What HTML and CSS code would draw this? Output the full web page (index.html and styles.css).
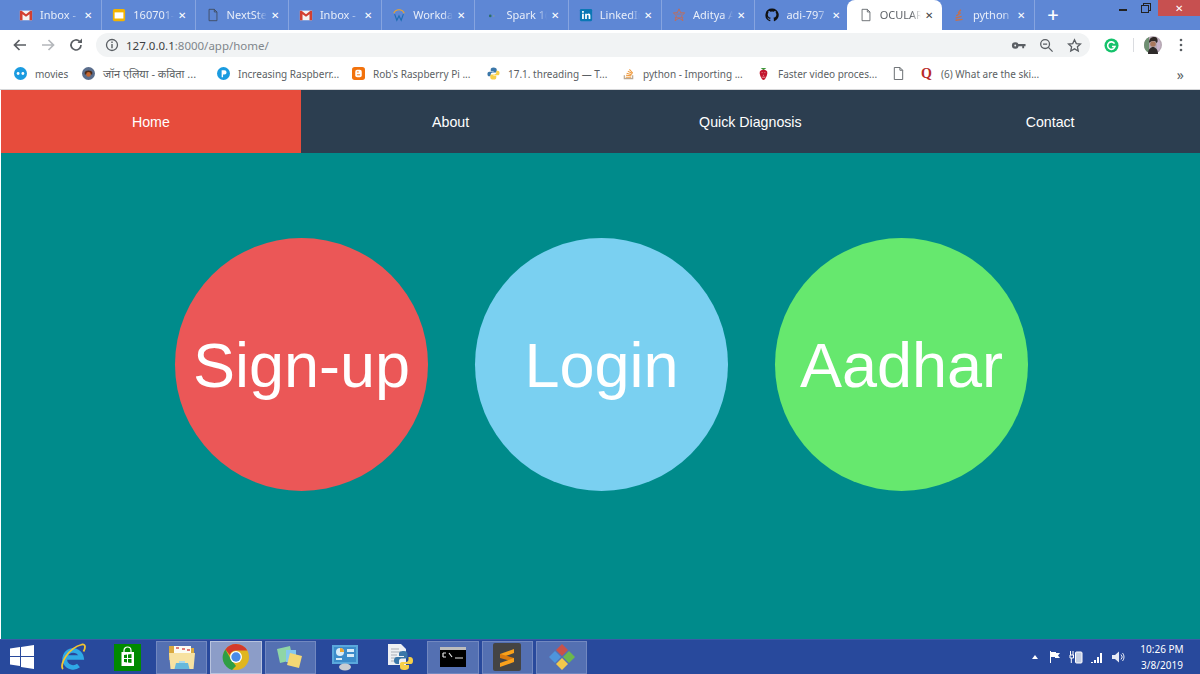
FILE: index.html
```html
<!DOCTYPE html>
<html lang="en">
<head>
  <meta charset="UTF-8">
  <title>OCULAR</title>
  <link rel="stylesheet" href="styles.css">
</head>
<body>
  <!-- Browser tabs -->
  <div class="tabstrip">
    <div class="tab">
      <svg class="fav" viewBox="0 0 16 16"><path d="M1 3h14v11H1z" fill="#f4f4f4"/><path d="M1 3v11h3V7l4 3 4-3v7h3V3h-2L8 7 3 3z" fill="#d23f31"/></svg>
      <span class="tab-title">Inbox -</span><span class="tab-x">✕</span>
    </div>
    <div class="tab">
      <svg class="fav" viewBox="0 0 16 16"><rect x="1" y="1" width="14" height="14" rx="2" fill="#f4b400"/><rect x="3" y="5" width="10" height="7" fill="#fff"/></svg>
      <span class="tab-title">160701-</span><span class="tab-x">✕</span>
    </div>
    <div class="tab">
      <svg class="fav" viewBox="0 0 16 16"><path d="M3.500 1.500h6l3 3v10h-9zM9.500 1.500v3h3" fill="none" stroke="#3f4a5e"/></svg>
      <span class="tab-title">NextSte</span><span class="tab-x">✕</span>
    </div>
    <div class="tab">
      <svg class="fav" viewBox="0 0 16 16"><path d="M1 3h14v11H1z" fill="#f4f4f4"/><path d="M1 3v11h3V7l4 3 4-3v7h3V3h-2L8 7 3 3z" fill="#d23f31"/></svg>
      <span class="tab-title">Inbox -</span><span class="tab-x">✕</span>
    </div>
    <div class="tab">
      <svg class="fav" viewBox="0 0 16 16"><path d="M2 6a6.500 6.500 0 0 1 12 0" fill="none" stroke="#f5a623" stroke-width="1.300"/><path d="M3 7l2.500 7L8 9l2.500 5L13 7" fill="none" stroke="#1f6fb5" stroke-width="1.300"/></svg>
      <span class="tab-title">Workda</span><span class="tab-x">✕</span>
    </div>
    <div class="tab">
      <svg class="fav" viewBox="0 0 16 16"><circle cx="6" cy="9" r="1.500" fill="#2c6e6a"/><circle cx="10" cy="9" r="1" fill="#7d9aa8"/></svg>
      <span class="tab-title">Spark 1(</span><span class="tab-x">✕</span>
    </div>
    <div class="tab">
      <svg class="fav" viewBox="0 0 16 16"><rect x="1" y="1" width="14" height="14" rx="1.500" fill="#0a77b5"/><path d="M3.500 6.500h2v6h-2zM3.500 3.500h2v2h-2zM7 6.500h2v1c.5-.8 1.200-1.200 2-1.200 1.500 0 2 1 2 2.500v3.700h-2V9c0-.7-.3-1-.9-1S9 8.400 9 9.100v3.400H7z" fill="#fff"/></svg>
      <span class="tab-title">LinkedIn</span><span class="tab-x">✕</span>
    </div>
    <div class="tab">
      <svg class="fav" viewBox="0 0 16 16"><path d="M8 1l2 4.500h4.500L11 9l1.500 5.500L8 11.500 3.500 14.500 5 9 1.500 5.500H6z" fill="none" stroke="#c96a4f"/><path d="M3 11h10M5 7h6" stroke="#c96a4f" stroke-width=".7"/></svg>
      <span class="tab-title">Aditya A</span><span class="tab-x">✕</span>
    </div>
    <div class="tab">
      <svg class="fav" viewBox="0 0 16 16"><path d="M8 .5a7.500 7.500 0 0 0-2.400 14.600c.4.100.5-.2.500-.4v-1.300c-2.100.5-2.500-1-2.500-1-.3-.9-.8-1.100-.8-1.100-.7-.5.100-.5.100-.5.700.1 1.100.8 1.100.8.700 1.100 1.700.8 2.100.6.100-.5.300-.8.500-1-1.700-.2-3.400-.8-3.400-3.700 0-.8.300-1.500.8-2-.1-.2-.3-1 .1-2 0 0 .6-.2 2.100.8a7 7 0 0 1 3.800 0c1.500-1 2.100-.8 2.100-.8.400 1 .2 1.800.1 2 .5.500.8 1.200.8 2 0 2.900-1.800 3.500-3.400 3.700.3.200.5.700.5 1.400v2.100c0 .2.100.5.500.4A7.500 7.500 0 0 0 8 .5z" fill="#111"/></svg>
      <span class="tab-title">adi-797</span><span class="tab-x">✕</span>
    </div>
    <div class="tab active">
      <svg class="fav" viewBox="0 0 16 16"><path d="M3.500 1.500h6l3 3v10h-9zM9.500 1.500v3h3" fill="none" stroke="#5f6368"/></svg>
      <span class="tab-title">OCULAR</span><span class="tab-x">✕</span>
    </div>
    <div class="tab">
      <svg class="fav" viewBox="0 0 16 16"><path d="M4 14l8-1M4 11.500l7-2M5 9l5-3.500M7 6l3-4" fill="none" stroke="#c7704a" stroke-width="1.500"/></svg>
      <span class="tab-title">python</span><span class="tab-x">✕</span>
    </div>
    <span class="new-tab">+</span>
    <div class="win-btns">
      <span class="win-min"></span>
      <span class="win-restore"></span>
      <span class="win-close">✕</span>
    </div>
  </div>

  <!-- Address bar -->
  <div class="toolbar">
    <svg class="tool" viewBox="0 0 16 16"><path d="M14 8H3M7.500 3L2.500 8l5 5" fill="none" stroke="#5a5e63" stroke-width="1.700"/></svg>
    <svg class="tool" viewBox="0 0 16 16"><path d="M2 8h11M8.500 3l5 5-5 5" fill="none" stroke="#b4b7bb" stroke-width="1.700"/></svg>
    <svg class="tool" viewBox="0 0 16 16"><path d="M13 8a5 5 0 1 1-1.500-3.600" fill="none" stroke="#5a5e63" stroke-width="1.700"/><path d="M9.500 6h4.500V1.500z" fill="#5a5e63"/></svg>
    <div class="omnibox">
      <svg class="info" viewBox="0 0 14 14"><circle cx="7" cy="7" r="5.500" fill="none" stroke="#5a5e63" stroke-width="1.300"/><path d="M6.300 6h1.400v4.200H6.300zM6.300 3.600h1.400V5H6.300z" fill="#5a5e63"/></svg>
      <span class="url">127.0.0.1<span class="url-dim">:8000/app/home/</span></span>
      <div class="omni-right">
        <svg class="omni-icon" viewBox="0 0 16 16"><circle cx="4.500" cy="8" r="3.500" fill="#5a5e63"/><path d="M6 6.300h9.500v2.500h-1.500v2.200h-2V8.800H6z" fill="#5a5e63"/><circle cx="4.500" cy="8" r="1" fill="#f1f3f4"/></svg>
        <svg class="omni-icon" viewBox="0 0 16 16"><circle cx="6.500" cy="6.500" r="4.700" fill="none" stroke="#5a5e63" stroke-width="1.400"/><path d="M10 10l4.500 4.500M4.300 6.500h4.400" fill="none" stroke="#5a5e63" stroke-width="1.400"/></svg>
        <svg class="omni-icon" viewBox="0 0 16 16"><path d="M8 1.800l1.900 4.100 4.500.5-3.300 3 .9 4.500-4-2.300-4 2.300.9-4.500-3.300-3 4.500-.5z" fill="none" stroke="#5a5e63" stroke-width="1.400"/></svg>
      </div>
    </div>
    <svg class="grammarly" viewBox="0 0 16 16"><circle cx="8" cy="8" r="7.500" fill="#15c26b"/><path d="M11.300 6a4 4 0 1 0 .5 3H8.500" fill="none" stroke="#fff" stroke-width="1.700"/></svg>
    <span class="tool-sep"></span>
    <svg class="avatar" viewBox="0 0 18 18"><circle cx="9" cy="9" r="9" fill="#b7a9b4"/><path d="M0 9a9 9 0 0 1 5-8v16a9 9 0 0 1-5-8z" fill="#6f8f72"/><path d="M13 2a9 9 0 0 1 0 14z" fill="#c8b3cc"/><path d="M5 7c0-4 2-6 5-6s4 2 3.500 5l-1.500 1c0-2-1-2-3-2S6 6 5 7z" fill="#2f2724"/><circle cx="9" cy="8" r="2.800" fill="#a9785e"/><path d="M4 18c0-5 3-7 5-7s5 2 5 7z" fill="#2e2a2a"/></svg>
    <svg class="menu" viewBox="0 0 4 16"><circle cx="2" cy="3" r="1.300" fill="#5a5e63"/><circle cx="2" cy="8" r="1.300" fill="#5a5e63"/><circle cx="2" cy="13" r="1.300" fill="#5a5e63"/></svg>
  </div>

  <!-- Bookmarks -->
  <div class="bookmarks">
    <div class="bm bm-short">
      <svg class="fav-b" viewBox="0 0 12 12"><circle cx="6" cy="6" r="6" fill="#1a9be0"/><circle cx="3.800" cy="6" r="1.300" fill="#fff"/><circle cx="8.200" cy="6" r="1.300" fill="#fff"/></svg>
      <span>movies</span>
    </div>
    <div class="bm">
      <svg class="fav-b" viewBox="0 0 14 14"><circle cx="7" cy="7" r="7" fill="#5a6d8c"/><path d="M3 6c0-3 8-3 8 0v2H3z" fill="#4d2a17"/><circle cx="7" cy="8" r="2.500" fill="#c4652f"/></svg>
      <span class="hindi">जॉन एलिया - कविता ...</span>
    </div>
    <div class="bm">
      <svg class="fav-b" viewBox="0 0 14 14"><circle cx="7" cy="7" r="7" fill="#1a9be0"/><path d="M5 3.500h3a2.300 2.300 0 0 1 0 4.600H6.500V11H5z" fill="#fff"/></svg>
      <span>Increasing Raspberr...</span>
    </div>
    <div class="bm">
      <svg class="fav-b" viewBox="0 0 14 14"><rect width="14" height="14" rx="3" fill="#f2720c"/><rect x="3.500" y="3" width="7" height="8" rx="2" fill="#fff"/><path d="M5.300 5.300h2M5.300 8.400h3.400" stroke="#f2720c"/></svg>
      <span>Rob's Raspberry Pi ...</span>
    </div>
    <div class="bm">
      <svg class="fav-b" viewBox="0 0 14 14"><path d="M7 .5C4.500.5 4 1.500 4 3v1.500h3.200V5H2.500C1 5 .5 6 .5 7.500S1 10 2.500 10H4V8c0-1 1-2 2-2h3c1 0 1.500-.7 1.500-1.500V3C10.500 1.500 9.500.5 7 .5z" fill="#3a76a8"/><path d="M7 13.500c2.500 0 3-1 3-2.500V9.500H6.800V9h4.700c1.500 0 2-1 2-2.500S13 4 11.500 4H10v2c0 1-1 2-2 2H5c-1 0-1.500.7-1.500 1.500V11c0 1.500 1 2.500 3.500 2.500z" fill="#f7cf48"/></svg>
      <span>17.1. threading — T...</span>
    </div>
    <div class="bm">
      <svg class="fav-b" viewBox="0 0 14 14"><path d="M2.500 9v3.500h9V9" fill="none" stroke="#b9a894" stroke-width="1.300"/><path d="M4 11h6M4.300 9l5.700.5M5 6.800l5.500 1.500M6.300 4.500l5 2.800M8 2.500l3.500 4" fill="none" stroke="#ef9a3d" stroke-width="1.100"/></svg>
      <span>python - Importing ...</span>
    </div>
    <div class="bm">
      <svg class="fav-b" viewBox="0 0 14 14"><path d="M4 1h6L7 3.500z" fill="#3c9a3c"/><path d="M7 3c3.500 0 4.500 2 4 4.500S8.500 14 7 14 3.500 10 3 7.500 3.500 3 7 3z" fill="#c3162f"/><path d="M5 6h1M8 6h1M6.500 9h1M5 11h4" stroke="#f3b7b7" stroke-width=".8"/></svg>
      <span>Faster video proces...</span>
    </div>
    <div class="bm bm-icon">
      <svg class="fav-b" viewBox="0 0 14 14"><path d="M2.500.5h6l3 3v10h-9zM8.500.5v3h3" fill="none" stroke="#5f6368"/></svg>
    </div>
    <div class="bm bm-last">
      <span class="quora">Q</span>
      <span>(6) What are the ski...</span>
    </div>
    <span class="bm-more">»</span>
  </div>

  <!-- Site nav -->
  <nav class="site-nav">
    <a class="nav-link current" href="#">Home</a>
    <a class="nav-link" href="#">About</a>
    <a class="nav-link" href="#">Quick Diagnosis</a>
    <a class="nav-link" href="#">Contact</a>
  </nav>

  <main class="home">
    <a class="circle red" href="#">Sign-up</a>
    <a class="circle blue" href="#">Login</a>
    <a class="circle green" href="#">Aadhar</a>
  </main>

  <!-- Windows taskbar -->
  <div class="taskbar">
    <div class="task task-start">
      <svg class="ico-start" viewBox="0 0 24 24"><path d="M0 3.500l10-1.400V11H0zM11 2L24 0v11H11zM0 12h10v9L0 19.600zM11 12h13v12l-13-1.900z" fill="#fff"/></svg>
    </div>
    <div class="task">
      <svg class="ico" viewBox="0 0 28 28"><path d="M5.500 14.500h17a8.500 8.500 0 1 0-3 8" fill="none" stroke="#2fa9e6" stroke-width="4.500"/><path d="M4 26C0 22 9 5 23 1.500c4-.5 3.500 3.500 1.500 7" fill="none" stroke="#f4c430" stroke-width="1.800"/></svg>
    </div>
    <div class="task">
      <svg class="ico store" viewBox="0 0 27 27"><rect width="27" height="27" fill="#008a00"/><path d="M7.500 8h12.500v14H7.500z" fill="#fff"/><path d="M10 8V6.500a3.500 3.500 0 0 1 7 0V8" fill="none" stroke="#fff" stroke-width="1.200"/><path d="M10 11l3-.4v3.400h-3zM14 10.500l3.500-.5v4h-3.500zM10 15h3v3.400l-3-.4zM14 15h3.500v4l-3.500-.5z" fill="#008a00"/></svg>
    </div>
    <div class="task boxed">
      <svg class="ico" viewBox="0 0 28 28"><path d="M1 3h10l2 2h13v12H1z" fill="#d9a93f"/><rect x="6" y="3" width="17" height="9" fill="#fbfbf3"/><path d="M8 5h3M14 6h3M19 7h3" stroke="#d9534f" stroke-width="1.500"/><path d="M1 10h26l-1.500 16h-23z" fill="#f7e2a2"/><path d="M8 20h12l1.500 6h-15z" fill="#66b8dc"/><path d="M11 18h6v2h-6z" fill="#a9d8ea"/></svg>
    </div>
    <div class="task boxed open">
      <svg class="ico" viewBox="0 0 28 28"><circle cx="14" cy="14" r="13" fill="#e0b61f"/><path d="M14 1a13 13 0 0 1 11.300 6.500H14a6.500 6.500 0 0 0-6.200 4.500L3.400 6.500A13 13 0 0 1 14 1z" fill="#d33a2c"/><path d="M3.400 6.500L9 16.500l5 6.500-4 4A13 13 0 0 1 3.400 6.500z" fill="#2f9e44"/><circle cx="14" cy="14" r="6" fill="#fff"/><circle cx="14" cy="14" r="4.700" fill="#4a8be8"/></svg>
    </div>
    <div class="task boxed">
      <svg class="ico" viewBox="0 0 28 28"><path d="M1 6l13-3 3 14-13 3z" fill="#8fd6a6"/><path d="M10 7h10v12H10z" fill="#86c7ee"/><path d="M14 10l12 3-3 12-12-3z" fill="#f4d774"/></svg>
    </div>
    <div class="task">
      <svg class="ico" viewBox="0 0 28 28"><rect x="1" y="2" width="26" height="19" fill="#5aa8dc"/><rect x="3" y="4" width="22" height="15" fill="#3c8ccb"/><circle cx="9" cy="9" r="4" fill="#d9ecf8"/><path d="M9 9V5a4 4 0 0 1 4 4z" fill="#f0a830"/><path d="M16 6h7v3h-7zM16 11h7v3h-7zM5 15h6v2H5z" fill="#d9ecf8"/><ellipse cx="14" cy="24" rx="6" ry="3.500" fill="#c9cdd2"/></svg>
    </div>
    <div class="task">
      <svg class="ico" viewBox="0 0 28 28"><path d="M3 1h13l5 5v16H3z" fill="#eef0f3"/><path d="M6 6h8M6 9h10M6 12h6M6 15h6M6 18h6" stroke="#a9aeb5"/><path d="M19 8c-4 0-5 1-5 3v2h5v1h-7c-2 0-3 1.500-3 3.500S10 21 12 21h2v-3c0-1.500 1-2.500 2.500-2.500h4c1.500 0 2-1 2-2V11c0-2-1-3-3.500-3z" fill="#3a76a8"/><path d="M19 27c4 0 5-1 5-3v-2h-5v-1h7c1.500 0 2-1.500 2-3.500S27 14 25 14h-1.500v2.500c0 1.500-1 2.500-2.500 2.500h-4c-1.500 0-2 1-2 2v3c0 2 1 3 4 3z" fill="#f7cf48"/></svg>
    </div>
    <div class="task boxed">
      <svg class="ico cmd" viewBox="0 0 26 20"><rect width="26" height="20" fill="#000"/><rect width="26" height="3" fill="#bdbdbd"/><path d="M3 6h3M3 10h3M3 6v4M9 6l3 4M15 11h8" stroke="#e5e5e5" fill="none" stroke-width="1.200"/></svg>
    </div>
    <div class="task boxed">
      <svg class="ico" viewBox="0 0 28 28"><rect width="28" height="28" rx="2" fill="#444"/><path d="M21 6L7 11v4l14-5z" fill="#f9a11b"/><path d="M7 11l14 4v4L7 15z" fill="#d97a0f"/><path d="M21 15L7 20v4l14-5z" fill="#f9a11b"/></svg>
    </div>
    <div class="task boxed">
      <svg class="ico" viewBox="0 0 28 28"><path d="M14 1l6 6-6 6-6-6z" fill="#c9524a"/><path d="M7 8l6 6-6 6-6-6z" fill="#4e95dc"/><path d="M21 8l6 6-6 6-6-6z" fill="#6cb84c"/><path d="M14 15l6 6-6 6-6-6z" fill="#f2c94c"/></svg>
    </div>
    <div class="tray">
      <span class="tray-up"></span>
      <svg class="tray-ico" viewBox="0 0 14 14"><path d="M2.500 1v12" stroke="#fff"/><path d="M3 2h5v1h4l-2 2.500L12 8H7V7H3z" fill="#fff"/></svg>
      <svg class="tray-ico" viewBox="0 0 14 14"><path d="M1.500 1v4M4 1v4M1 5h3.500v3H1zM2.300 8v5" stroke="#fff" fill="none"/><rect x="6.500" y="2" width="6.500" height="11" rx="1" fill="#c5cfe4" stroke="#fff"/></svg>
      <svg class="tray-ico" viewBox="0 0 14 14"><path d="M1 12h2v1H1zM4 10h2v3H4zM7 7h2v6H7zM10 3h2v10h-2z" fill="#fff"/></svg>
      <svg class="tray-ico" viewBox="0 0 14 14"><path d="M1 5h3l4-3.500v11L4 9H1z" fill="#e6eaf4"/><path d="M10 4.500a3.500 3.500 0 0 1 0 5M11.500 3a6 6 0 0 1 0 8" fill="none" stroke="#e6eaf4"/></svg>
      <div class="clock"><span>10:26 PM</span><span>3/8/2019</span></div>
    </div>
  </div>
</body>
</html>
```

FILE: styles.css
```css
/* General Styles */
* {
  box-sizing: border-box;
}

html,
body {
  margin: 0;
  height: 100%;
  overflow: hidden;
}

body {
  display: flex;
  flex-direction: column;
  height: 674px;
  font-family: 'Noto Sans', 'Liberation Sans', sans-serif;
  background-color: #fff;
}

/* Browser tabs */
.tabstrip {
  display: flex;
  align-items: center;
  height: 30px;
  padding-left: 9px;
  background-color: #5e87d5;
  position: relative;
}

.tab {
  display: flex;
  align-items: center;
  flex: none;
  width: 93.3px;
  height: 30px;
  padding: 0 9px 0 10px;
  border-right: 1px solid #86a4e0;
  color: #e8eef9;
  font-size: 11px;
}

.tab.active {
  width: 95.3px;
  margin-left: -2px;
  padding-left: 12px;
  background-color: #fff;
  color: #5f6368;
  border-right: none;
  border-radius: 8px 8px 0 0;
}

.tab:nth-child(9) {
  border-right: none;
}

.fav {
  flex: none;
  width: 14px;
  height: 14px;
  margin-right: 7px;
}

.tab-title {
  flex: 1;
  min-width: 0;
  padding-bottom: 2px;
  white-space: nowrap;
  -webkit-mask-image: linear-gradient(to right, #000 75%, transparent);
  mask-image: linear-gradient(to right, #000 75%, transparent);
}

.tab-x {
  flex: none;
  margin-left: 4px;
  font-size: 10px;
  color: #fff;
}

.tab.active .tab-x {
  color: #444;
}

.new-tab {
  margin-left: 12px;
  font-size: 20px;
  font-weight: 500;
  line-height: 1;
  color: #fff;
}

.win-btns {
  display: flex;
  align-items: flex-start;
  position: absolute;
  top: 0;
  right: 0;
  height: 16px;
}

.win-min {
  width: 8px;
  height: 2px;
  margin: 9px 14px 0 0;
  background-color: #222;
}

.win-restore {
  width: 8px;
  height: 8px;
  margin: 5px 9px 0 0;
  border: 1px solid #222;
  box-shadow: 2px -2px 0 -1px #5e87d5, 2px -2px 0 0 #222;
}

.win-close {
  width: 42px;
  height: 16px;
  background-color: #c75050;
  color: #fff;
  font-size: 10px;
  line-height: 16px;
  text-align: center;
}

/* Address bar */
.toolbar {
  display: flex;
  align-items: center;
  height: 30px;
  padding-left: 12px;
  background-color: #fff;
}

.tool {
  flex: none;
  width: 16px;
  height: 16px;
  margin-right: 12px;
}

.omnibox {
  display: flex;
  align-items: center;
  flex: none;
  width: 994px;
  height: 24px;
  padding: 0 8px 0 9px;
  border-radius: 12px;
  background-color: #f1f3f4;
  font-size: 11.5px;
}

.info {
  flex: none;
  width: 14px;
  height: 14px;
  margin-right: 7px;
}

.url {
  color: #3c3f43;
}

.url-dim {
  color: #80868b;
}

.omni-right {
  display: flex;
  align-items: center;
  gap: 13px;
  margin-left: auto;
}

.omni-icon {
  width: 15px;
  height: 15px;
}

.grammarly {
  flex: none;
  width: 15px;
  height: 15px;
  margin-left: 14px;
}

.tool-sep {
  flex: none;
  width: 1px;
  height: 14px;
  margin-left: 14px;
  background-color: #dadce0;
}

.avatar {
  flex: none;
  width: 18px;
  height: 18px;
  margin-left: 10px;
}

.menu {
  flex: none;
  width: 4px;
  height: 16px;
  margin-left: 17px;
}

/* Bookmarks */
.bookmarks {
  display: flex;
  align-items: center;
  height: 30px;
  padding: 0 0 2px 14px;
  background-color: #fff;
  border-bottom: 1px solid #d5d6d8;
  color: #5b5f64;
  font-size: 10px;
  position: relative;
}

.bm {
  display: flex;
  align-items: center;
  flex: none;
  width: 135px;
  white-space: nowrap;
}

.bm-short {
  width: 68px;
}

.bm-icon {
  width: 29px;
}

.bm-last {
  width: auto;
}

.fav-b {
  flex: none;
  width: 13px;
  height: 13px;
  margin-right: 8px;
}

.quora {
  width: 13px;
  margin-right: 7px;
  color: #b92b27;
  font-family: 'Liberation Serif', serif;
  font-size: 14px;
  font-weight: 700;
}

.hindi {
  font-family: 'Noto Sans', 'Noto Sans Devanagari', 'Lohit Devanagari', sans-serif;
  font-size: 11px;
}

.bm-more {
  position: absolute;
  right: 16px;
  top: 5px;
  font-size: 14px;
}

/* Site nav */
.site-nav {
  display: flex;
  flex: none;
  height: 63px;
  margin-left: 1px;
  background-color: #2c3e50;
}

.nav-link {
  display: flex;
  align-items: center;
  justify-content: center;
  width: 300px;
  color: #fff;
  font-family: 'Liberation Sans', sans-serif;
  font-size: 14.2px;
  text-decoration: none;
}

.nav-link.current {
  background-color: #e74c3c;
}

/* Circles */
.home {
  display: flex;
  flex: 1;
  gap: 47px;
  margin-left: 1px;
  padding: 85px 0 0 174px;
  background-color: #008b8b;
}

.circle {
  display: flex;
  align-items: center;
  justify-content: center;
  width: 253px;
  height: 253px;
  border-radius: 50%;
  color: #fff;
  font-family: 'Liberation Sans', sans-serif;
  font-size: 63px;
  text-decoration: none;
}

.red {
  background-color: #eb5757;
}

.blue {
  background-color: #7ad0f1;
}

.green {
  background-color: #66e86e;
}

/* Windows taskbar */
.taskbar {
  display: flex;
  align-items: center;
  gap: 3px;
  flex: none;
  height: 35px;
  background-color: #28499c;
  border-top: 1px solid #3a5aa8;
}

.task {
  display: flex;
  align-items: center;
  justify-content: center;
  flex: none;
  width: 51.3px;
  height: 33px;
}

.task-start {
  width: 44.4px;
}

.boxed {
  background-color: #5470b2;
  border: 1px solid #7288c0;
}

.open {
  background-color: #8c9dc8;
  border-color: #b8c3de;
}

.ico-start {
  width: 24px;
  height: 24px;
}

.ico {
  width: 28px;
  height: 28px;
}

.ico.store {
  width: 27px;
  height: 27px;
}

.ico.cmd {
  width: 26px;
  height: 20px;
}

.tray {
  display: flex;
  align-items: center;
  gap: 7px;
  margin-left: auto;
  padding-right: 8px;
  color: #fff;
}

.tray-up {
  width: 0;
  height: 0;
  margin-right: 3px;
  border-left: 3.5px solid transparent;
  border-right: 3.5px solid transparent;
  border-bottom: 4px solid #fff;
}

.tray-ico {
  width: 14px;
  height: 14px;
}

.clock {
  display: flex;
  flex-direction: column;
  align-items: center;
  width: 60px;
  font-size: 10px;
  line-height: 16px;
}
```
